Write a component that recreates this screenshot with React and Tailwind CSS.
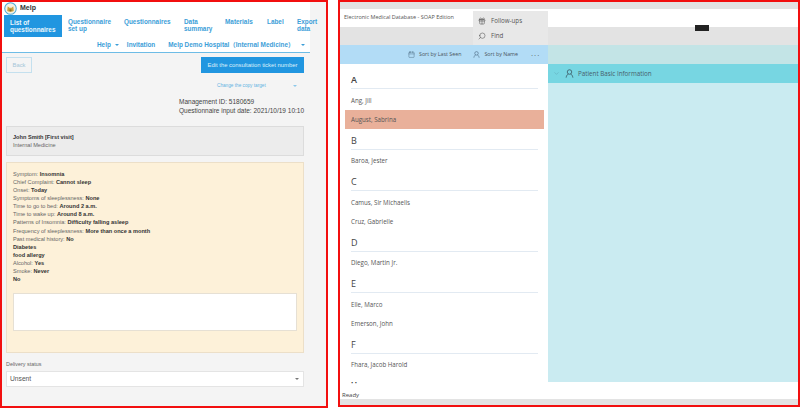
import React from "react";
import { Calendar, Gift, Search, ChevronDown } from "lucide-react";

const tabs = [
  { label: ["Questionnaire", "set up"], w: "w-[56px]" },
  { label: ["Questionnaires"], w: "w-[60px]" },
  { label: ["Data", "summary"], w: "w-[41px]" },
  { label: ["Materials"], w: "w-[42px]" },
  { label: ["Label"], w: "w-[30px]" },
  { label: ["Export", "data"], w: "w-[24px]" },
];

const answers = [
  ["Symptom:", "Insomnia"],
  ["Chief Complaint:", "Cannot sleep"],
  ["Onset:", "Today"],
  ["Symptoms of sleeplessness:", "None"],
  ["Time to go to bed:", "Around 2 a.m."],
  ["Time to wake up:", "Around 8 a.m."],
  ["Patterns of Insomnia:", "Difficulty falling asleep"],
  ["Frequency of sleeplessness:", "More than once a month"],
  ["Past medical history:", "No"],
  ["", "Diabetes"],
  ["", "food allergy"],
  ["Alcohol:", "Yes"],
  ["Smoke:", "Never"],
  ["", "No"],
];

const patients = [
  { letter: "A", names: ["Ang, Jill", "August, Sabrina"] },
  { letter: "B", names: ["Baroa, Jester"] },
  { letter: "C", names: ["Camus, Sir Michaelis", "Cruz, Gabrielle"] },
  { letter: "D", names: ["Diego, Martin Jr."] },
  { letter: "E", names: ["Elle, Marco", "Emerson, John"] },
  { letter: "F", names: ["Fhara, Jacob Harold"] },
];

function Caret({ className }) {
  return <span className={"shrink-0 w-0 h-0 border-l-[2px] border-r-[2px] border-t-[2px] border-l-transparent border-r-transparent " + className}></span>;
}

function PersonIcon({ className }) {
  return (
    <svg viewBox="0 0 12 12" className={className} fill="none" stroke="currentColor" strokeWidth="1">
      <circle cx="6" cy="4" r="3" />
      <path d="M1.500 11.500c.4-3 2-4.500 3-4.800M10.500 11.500c-.4-3-2-4.500-3-4.800" />
    </svg>
  );
}

function Logo() {
  return (
    <svg viewBox="0 0 14 14" className="w-[13px] h-[13px] shrink-0">
      <circle cx="7" cy="7" r="6.200" fill="#f6f1e2" stroke="#4aa8d8" strokeWidth="1.100" />
      <path d="M3.500 9.500 4 4.500l1.800 1.600h2.400L10 4.500l.5 5c-1 1.500-6 1.500-7 0z" fill="#c9a13f" />
      <circle cx="7" cy="9" r="1.200" fill="#8c6a2c" />
    </svg>
  );
}

function MelpPanel() {
  return (
    <div className="w-[328px] h-[408px] shrink-0 border-2 border-[#f20f0f] bg-[#f4f4f4] flex flex-col font-['Liberation_Sans','Noto_Sans_CJK_JP',sans-serif]">
      <div className="w-[308px] bg-white border-b border-[#6dbce6] h-[51px] shrink-0">
        <div className="h-[12px] flex items-center gap-[3px] pl-[2px]">
          <Logo />
          <span className="text-[7px] font-bold text-[#333]">Melp</span>
        </div>
        <div className="h-[23px] flex items-center pl-[2px]">
          <div className="w-[58px] shrink-0 h-[22px] bg-[#2196e0] text-[#eaf6fd] text-[6.400px] leading-[7px] font-bold pl-[6px] flex flex-col justify-center whitespace-nowrap">
            <span>List of</span>
            <span>questionnaires</span>
          </div>
          <div className="flex shrink-0 pl-[6px]">
            {tabs.map((t) => (
              <div key={t.label[0]} className={"flex flex-col shrink-0 whitespace-nowrap text-[6.400px] leading-[6.800px] font-bold text-[#3c9ed8] " + t.w}>
                {t.label.map((l) => (
                  <span key={l}>{l}</span>
                ))}
              </div>
            ))}
          </div>
        </div>
        <div className="h-[15px] flex items-center whitespace-nowrap text-[6.400px] font-bold text-[#3c9ed8] pl-[95px]">
          <span>Help</span>
          <Caret className="border-t-[#3c9ed8] ml-[4px]" />
          <span className="ml-[8px]">Invitation</span>
          <span className="ml-[13px]">Melp Demo Hospital（Internal Medicine）</span>
          <Caret className="border-t-[#3c9ed8] ml-[7px]" />
        </div>
      </div>
      <div className="w-[298px] ml-[4px] flex flex-col">
        <div className="flex justify-between mt-[4px]">
          <button className="w-[26px] h-[16px] border border-[#c4e0ee] text-[5.800px] text-[#a5c6d8]">Back</button>
          <button className="w-[103px] h-[16px] bg-[#2196e0] text-[5.900px] text-[#dff0fa]">Edit the consultation ticket number</button>
        </div>
        <div className="h-[10px] mt-[8px] flex items-center text-[4.700px] text-[#62b3e2] pl-[211px]">
          <span>Change the copy target</span>
          <Caret className="border-t-[#8cc8ea] ml-[27px]" />
        </div>
        <div className="mt-[7px] self-end text-[6.500px] leading-[8.500px] text-[#444] w-[125px] whitespace-nowrap">
          <div>Management ID: 5180659</div>
          <div>Questionnaire input date: 2021/10/19 10:10</div>
        </div>
        <div className="mt-[11px] h-[30px] bg-[#ececec] border border-[#dcdcdc] pl-[6px] flex flex-col justify-center text-[5.600px] leading-[8px]">
          <div className="font-bold text-[#333]">John Smith [First visit]</div>
          <div className="text-[#666]">Internal Medicine</div>
        </div>
        <div className="mt-[6px] h-[191px] bg-[#fdf1d9] border border-[#ecdfc8] pl-[6px] pr-[6px] pt-[7px]">
          <div className="text-[5.600px] leading-[8.080px] text-[#666]">
            {answers.map(([q, a], i) => (
              <div key={i}>
                {q} <span className="font-bold text-[#333]">{a}</span>
              </div>
            ))}
          </div>
          <div className="mt-[10px] h-[38px] bg-white border border-[#e6e0d4]"></div>
        </div>
        <div className="mt-[8px] text-[5.400px] leading-[6px] text-[#666]">Delivery status</div>
        <div className="mt-[4px] h-[16px] bg-white border border-[#e4e4e4] flex items-center justify-between pl-[3px] pr-[4px] text-[6.700px] text-[#555]">
          <span>Unsent</span>
          <Caret className="border-t-[#777]" />
        </div>
      </div>
    </div>
  );
}

function SoapPanel() {
  return (
    <div className="relative ml-[10px] w-[462px] h-[407px] border-2 border-[#f20f0f] bg-white flex flex-col font-['Open_Sans',sans-serif] overflow-hidden">
      <div className="h-[7px] bg-[#e3e3e3] shrink-0"></div>
      <div className="h-[18px] shrink-0 flex items-center pl-[4px] pb-[1px] text-[5.500px] text-[#555] relative">
        Electronic Medical Database - SOAP Edition
        <span className="absolute left-[355px] top-[16px] w-[14px] h-[6px] bg-[#222] z-10"></span>
      </div>
      <div className="h-[18px] bg-[#e3e3e3] shrink-0"></div>
      <div className="h-[19px] shrink-0 flex">
        <div className="w-[208px] bg-[#b2dcf6] flex items-center whitespace-nowrap text-[5.300px] text-[#4a5560] pl-[68px]">
          <Calendar className="w-[7px] h-[7px] text-[#47647c]" strokeWidth={1.500} />
          <span className="ml-[4px]">Sort by Last Seen</span>
          <PersonIcon className="w-[7px] h-[7px] ml-[12px] text-[#47647c]" />
          <span className="ml-[4px]">Sort by Name</span>
          <span className="ml-[13px] text-[8px] leading-[8px] tracking-[1px] text-[#555]">···</span>
        </div>
        <div className="flex-1 bg-[#c3e4e6]"></div>
      </div>
      <div className="flex-1 flex min-h-0">
        <div className="w-[208px] bg-white pl-[5px] flex flex-col">
          {patients.map((g) => (
            <div key={g.letter}>
              <div className={"ml-[6px] w-[187px] border-b border-[#e2eaf2] mb-[2px] flex items-end pb-[2px] text-[9px] leading-[12px] text-[#444] " + (g.letter === "A" ? "font-semibold h-[25px]" : "h-[20.500px]")}>
                {g.letter}
              </div>
              {g.names.map((n) => (
                <div
                  key={n}
                  className={"h-[19px] w-[199px] pl-[6px] flex items-center text-[6.200px] text-[#555] " + (n === "August, Sabrina" ? "bg-[#e9b09a] text-[#5c4a40]" : "")}
                >
                  {n}
                </div>
              ))}
            </div>
          ))}
          <div className="ml-[6px] mt-[5px] text-[6px] leading-[6px] text-[#333]">• •</div>
        </div>
        <div className="flex-1 flex flex-col h-[318px]">
          <div className="h-[19px] bg-[#77d6e2] flex items-center text-[6.250px] text-[#47606a] pl-[5px]">
            <ChevronDown className="w-[7px] h-[7px] text-[#5c9fb0]" strokeWidth={1.500} />
            <PersonIcon className="w-[9px] h-[9px] ml-[5px] text-[#37515c]" />
            <span className="ml-[4px]">Patient Basic Information</span>
          </div>
          <div className="flex-1 bg-[#caebf1]"></div>
        </div>
      </div>
      <div className="absolute left-[2px] top-[389px] text-[6px] leading-[8px] text-[#444]">Ready</div>
      <div className="h-[6px] bg-[#e3e3e3] shrink-0 relative"></div>
      <div className="absolute left-[133px] top-[9px] w-[75px] h-[34px] bg-[#e8e8e8] pl-[5px] pt-[2px] flex flex-col text-[6.200px] text-[#555]">
        <div className="h-[15px] flex items-center gap-[5px]">
          <Gift className="w-[8px] h-[8px] text-[#444]" strokeWidth={1.500} />
          Follow-ups
        </div>
        <div className="h-[15px] flex items-center gap-[5px]">
          <Search className="w-[8px] h-[8px] text-[#444] -scale-x-100" strokeWidth={1.500} />
          Find
        </div>
      </div>
    </div>
  );
}

export default function App() {
  return (
    <div className="w-[800px] h-[409px] bg-white flex overflow-hidden">
      <MelpPanel />
      <SoapPanel />
    </div>
  );
}
